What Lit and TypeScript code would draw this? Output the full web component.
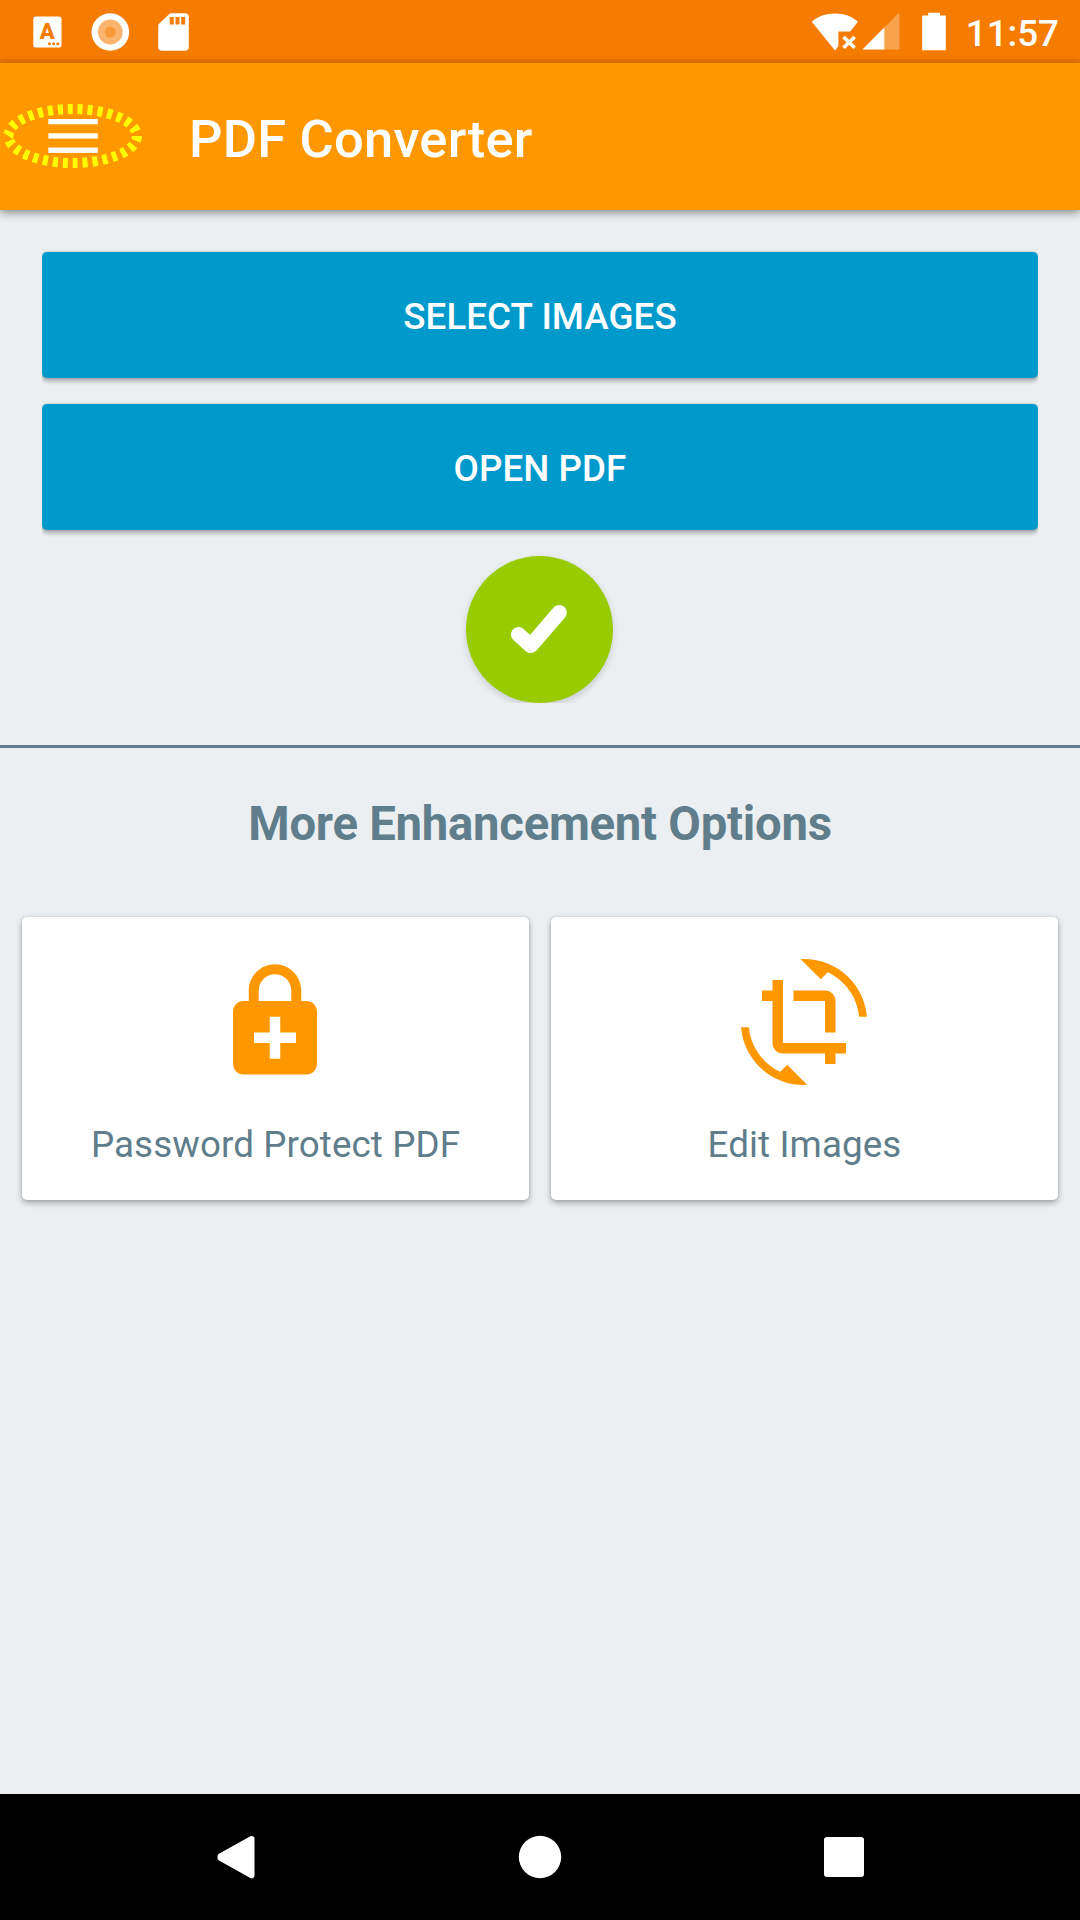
import { LitElement, html, css, svg } from "lit";
import { customElement, property } from "lit/decorators.js";

const lockIcon = svg`<path d="M18 8h-1V6c0-2.76-2.24-5-5-5S7 3.24 7 6v2H6c-1.1 0-2 .9-2 2v10c0 1.1.9 2 2 2h12c1.1 0 2-.9 2-2V10c0-1.1-.9-2-2-2zM8.9 6c0-1.71 1.39-3.1 3.1-3.1s3.1 1.39 3.1 3.1v2H8.9V6zM16 16h-3v3h-2v-3H8v-2h3v-3h2v3h3v2z"/>`;
const cropRotateIcon = svg`<path d="M7.47 21.49C4.2 19.93 1.86 16.76 1.5 13H0c.51 6.16 5.66 11 11.95 11 .23 0 .44-.02.66-.03L8.8 20.15l-1.33 1.34zM12.05 0c-.23 0-.44.02-.66.04l3.81 3.81 1.33-1.33C19.8 4.07 22.14 7.24 22.5 11H24c-.51-6.16-5.66-11-11.95-11zM16 14h2V8c0-1.11-.9-2-2-2h-6v2h6v6zm-8 2V4H6v2H4v2h2v8c0 1.1.89 2 2 2h8v2h2v-2h2v-2H8z"/>`;

@customElement("status-bar")
class StatusBar extends LitElement {
  static styles = css`
    :host {
      display: flex;
      justify-content: space-between;
      height: 63px;
      background: #f57c00;
      color: #fff;
    }
    .group {
      display: flex;
      align-items: center;
    }
    svg {
      display: block;
    }
    .left {
      padding-left: 26px;
      gap: 21px;
    }
    .right {
      padding-right: 21px;
    }
    .cell {
      margin-left: 3px;
    }
    .battery {
      margin-left: 22px;
    }
    .time {
      margin-left: 19px;
      padding-top: 4px;
      font-size: 36.75px;
      line-height: 40px;
      font-weight: 500;
    }
    .glyph {
      font: 900 22px Roboto, sans-serif;
    }
  `;
  render() {
    return html`
      <div class="group left">
        <svg width="42" height="42" viewBox="0 0 42 42" fill="#fff">
          <rect x="7.300" y="5.500" width="28.200" height="31" rx="2.500" />
          <text class="glyph" x="21.300" y="28.200" text-anchor="middle" fill="#f57c00">A</text>
          <g fill="#f57c00">
            <circle cx="23.400" cy="32.800" r="1.500" />
            <circle cx="27.600" cy="32.800" r="1.500" />
            <circle cx="31.800" cy="32.800" r="1.500" />
          </g>
        </svg>
        <svg width="42" height="42" viewBox="0 0 42 42">
          <circle cx="21.300" cy="21" r="18.800" fill="#fff" />
          <circle cx="21.300" cy="21" r="12.400" fill="#fab46e" />
          <circle cx="21.300" cy="21" r="5.600" fill="#f89a3c" />
        </svg>
        <svg width="42" height="42" viewBox="0 0 42 42">
          <g transform="translate(1 0)">
            <path
              fill="#fff"
              d="M18.500 2.200H32a3.800 3.800 0 0 1 3.800 3.800V36a3.800 3.800 0 0 1-3.800 3.800H9A3.800 3.800 0 0 1 5.200 36V14.500a2 2 0 0 1 .6-1.400L16.400 3A3 3 0 0 1 18.500 2.200z"
            />
            <path fill="#f57c00" d="M16.800 6h4v7.500h-4zM22.500 6h4v7.500h-4zM28.200 6h4v7.500h-4z" />
          </g>
        </svg>
      </div>
      <div class="group right">
        <svg width="48" height="40" viewBox="0 0 48 40" fill="#fff">
          <path d="M0.800 9.800C7 4.500 14.500 1.600 24 1.600S41 4.500 46.800 9.800L39.200 19.600H27.400V34L24 38.600z" />
          <path d="M32.500 25l11.200 10.700M43.700 25L32.500 35.700" stroke="#fff" stroke-width="3.600" />
        </svg>
        <svg class="cell" width="38" height="40" viewBox="0 0 38 40" fill="#fff">
          <path d="M37.300 0.500V37.500H0.500z" fill-opacity=".3" />
          <path d="M22.300 15.600V37.500H0.500z" />
        </svg>
        <svg class="battery" width="25" height="40" viewBox="0 0 25 40" fill="#fff">
          <path d="M6.200 0.700H18V3.500H23.800V38.300H0.200V3.500H6.200z" />
        </svg>
        <span class="time">11:57</span>
      </div>
    `;
  }
}

@customElement("app-bar")
class AppBar extends LitElement {
  static styles = css`
    :host {
      position: relative;
      display: flex;
      align-items: center;
      height: 147px;
      background: #ff9800;
      color: #fff;
      box-shadow: 0 4px 9px rgba(0, 0, 0, 0.25), 0 0 8px rgba(0, 0, 0, 0.25);
    }
    .menu {
      display: block;
      margin-left: 42px;
    }
    .title {
      margin: 0 0 0 84px;
      padding-top: 5px;
      font-size: 52.5px;
      line-height: 62px;
      font-weight: 500;
      letter-spacing: 0.2px;
    }
    .highlight {
      position: absolute;
      left: 0;
      top: 38px;
    }
  `;
  render() {
    return html`
      <svg class="menu" width="63" height="63" viewBox="0 0 63 63" fill="#fff">
        <rect x="6.300" y="14" width="49.500" height="5.300" />
        <rect x="6.300" y="28.300" width="49.500" height="5.300" />
        <rect x="6.300" y="42.600" width="49.500" height="5.300" />
      </svg>
      <h1 class="title">PDF Converter</h1>
      <svg class="highlight" width="146" height="70" viewBox="0 0 146 70">
        <ellipse cx="72.700" cy="35" rx="64.300" ry="27" fill="none" stroke="#ff0" stroke-width="10" pathLength="300" stroke-dasharray="5 5" />
      </svg>
    `;
  }
}

@customElement("option-card")
class OptionCard extends LitElement {
  @property() label = "";
  @property({ attribute: false }) icon: unknown = null;
  static styles = css`
    :host {
      display: flex;
      flex-direction: column;
      align-items: center;
      box-sizing: border-box;
      height: 283px;
      padding-top: 42px;
      border-radius: 5px;
      background: #fff;
      box-shadow: 0 3px 6px rgba(0, 0, 0, 0.3), 0 0 3px rgba(0, 0, 0, 0.12);
    }
    .icon {
      display: block;
      margin-right: 1px;
      fill: #ff9800;
    }
    .label {
      margin-top: 38px;
      font-size: 36.75px;
      line-height: 43px;
      letter-spacing: 0.1px;
      color: #607d8b;
    }
  `;
  render() {
    return html`
      <svg class="icon" width="126" height="126" viewBox="0 0 24 24">${this.icon}</svg>
      <span class="label">${this.label}</span>
    `;
  }
}

@customElement("nav-bar")
class NavBar extends LitElement {
  static styles = css`
    :host {
      display: flex;
      justify-content: center;
      align-items: center;
      gap: 220px;
      height: 126px;
      background: #000;
    }
    svg {
      display: block;
      fill: #fff;
    }
  `;
  render() {
    return html`
      <svg width="84" height="84" viewBox="0 0 84 84">
        <path d="M26.300 43L57.700 60.500V23.700L26.300 41.200Z" stroke="#fff" stroke-width="5.600" stroke-linejoin="round" />
      </svg>
      <svg width="84" height="84" viewBox="0 0 84 84"><circle cx="42" cy="42" r="21.200" /></svg>
      <svg width="84" height="84" viewBox="0 0 84 84"><rect x="22" y="22" width="40" height="40" rx="3" /></svg>
    `;
  }
}

@customElement("app-root")
class AppRoot extends LitElement {
  static styles = css`
    :host {
      display: flex;
      flex-direction: column;
      height: 1920px;
      overflow: hidden;
      background: #ebeff2;
      font-family: Roboto, sans-serif;
    }
    .content {
      flex: 1;
    }
    .actions {
      display: flex;
      flex-direction: column;
      align-items: center;
      gap: 26px;
      padding: 42px 42px;
    }
    .button {
      width: 100%;
      height: 126px;
      margin: 0;
      padding: 3px 0 0;
      border: 0;
      border-radius: 5px;
      background: #0099cc;
      color: #fff;
      font: 500 36.75px/43px Roboto, sans-serif;
      letter-spacing: 0.05px;
      text-transform: uppercase;
      box-shadow: 0 3px 5px rgba(0, 0, 0, 0.3), 0 0 3px rgba(0, 0, 0, 0.15);
      clip-path: inset(-20px 0);
    }
    .confirm {
      width: 147px;
      height: 147px;
      margin-right: 1px;
      padding: 0;
      border: 0;
      border-radius: 50%;
      background: #99cc00;
      box-shadow: 0 3px 7px rgba(0, 0, 0, 0.15);
      clip-path: inset(-20px -20px 0);
    }
    .confirm svg {
      display: block;
    }
    .divider {
      height: 3px;
      background: #607d8b;
    }
    .heading {
      margin: 0;
      padding: 48px 0 65px;
      font-size: 47.25px;
      line-height: 56px;
      font-weight: 700;
      letter-spacing: -0.25px;
      text-align: center;
      color: #607d8b;
    }
    .cards {
      display: grid;
      grid-template-columns: 1fr 1fr;
      gap: 22px;
      padding: 0 22px;
    }
  `;
  render() {
    return html`
      <status-bar></status-bar>
      <app-bar></app-bar>
      <main class="content">
        <section class="actions">
          <button class="button">Select Images</button>
          <button class="button">Open PDF</button>
          <button class="confirm">
            <svg width="147" height="147" viewBox="0 0 147 147">
              <path d="M52.500 78.500L64.800 89.600L93.300 56.500" fill="none" stroke="#fff" stroke-width="15" stroke-linecap="round" stroke-linejoin="round" />
            </svg>
          </button>
        </section>
        <div class="divider"></div>
        <h2 class="heading">More Enhancement Options</h2>
        <section class="cards">
          <option-card label="Password Protect PDF" .icon=${lockIcon}></option-card>
          <option-card label="Edit Images" .icon=${cropRotateIcon}></option-card>
        </section>
      </main>
      <nav-bar></nav-bar>
    `;
  }
}
